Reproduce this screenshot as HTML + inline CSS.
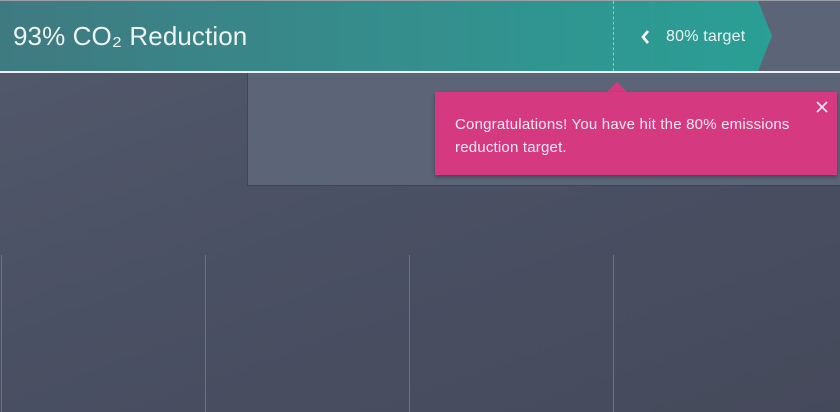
<!DOCTYPE html>
<html><head><meta charset="utf-8"><style>
*{margin:0;padding:0;box-sizing:border-box}
body{width:840px;height:412px;overflow:hidden;position:relative;font-family:"Liberation Sans",sans-serif;background:linear-gradient(160deg,#535a6c 0%,#4a5063 50%,#454a5b 100%)}
.top{position:absolute;left:0;top:0;width:840px;height:1px;background:#9aa0a8}
.bar{position:absolute;left:0;top:1px;width:772px;height:70px;background:linear-gradient(90deg,#3f7a81 0%,#358d8c 50%,#2a9f95 100%);clip-path:polygon(0 0,758px 0,772px 35px,758px 70px,0 70px)}
.right{position:absolute;left:758px;top:1px;width:82px;height:70px;background:#5c6477}
.line{position:absolute;left:0;top:71px;width:840px;height:2px;background:#f0f0f0}
.title{position:absolute;left:13px;top:21px;font-size:26px;color:#eef4f3;letter-spacing:0.1px}
.dash{position:absolute;left:613px;top:1px;height:70px;border-left:1px dashed #8fc9c4}
.tgt{position:absolute;left:666px;top:28px;font-size:16px;color:#eef6f4;letter-spacing:0.2px}
.chev{position:absolute;left:641px;top:29px}
.panel{position:absolute;left:247px;top:73px;width:593px;height:113px;background:#5c6478;border-left:1px solid #40465a;border-bottom:1px solid #40465a}
.toast{position:absolute;left:435px;top:92px;width:402px;height:83px;background:#d53a80;box-shadow:0 2px 4px rgba(0,0,0,.3);color:#fbe9f1;font-size:15px;line-height:23px;padding:21px 20px 0 20px;letter-spacing:0.2px}
.arrow{position:absolute;left:607px;top:82px;width:0;height:0;border-left:10px solid transparent;border-right:10px solid transparent;border-bottom:10px solid #d53a80}
.x{position:absolute;left:816px;top:101px}
.v{position:absolute;top:255px;width:1px;height:157px;background:#6b7285}
</style></head><body>
<div class="top"></div>
<div class="right"></div>
<div class="bar"></div>
<div class="line"></div>
<div class="title">93% CO₂ Reduction</div>
<div class="dash"></div>
<svg class="chev" width="10" height="16" viewBox="0 0 10 16"><path d="M7 2L2 8L7 14" stroke="#fff" stroke-width="2.6" fill="none"/></svg>
<div class="tgt">80% target</div>
<div class="panel"></div>
<div class="arrow"></div>
<div class="toast">Congratulations! You have hit the 80% emissions reduction target.</div>
<svg class="x" width="12" height="12" viewBox="0 0 12 12"><path d="M1 1L11 11M11 1L1 11" stroke="#fbe9f1" stroke-width="1.6"/></svg>
<div class="v" style="left:1px"></div>
<div class="v" style="left:205px"></div>
<div class="v" style="left:409px"></div>
<div class="v" style="left:613px"></div>
</body></html>
